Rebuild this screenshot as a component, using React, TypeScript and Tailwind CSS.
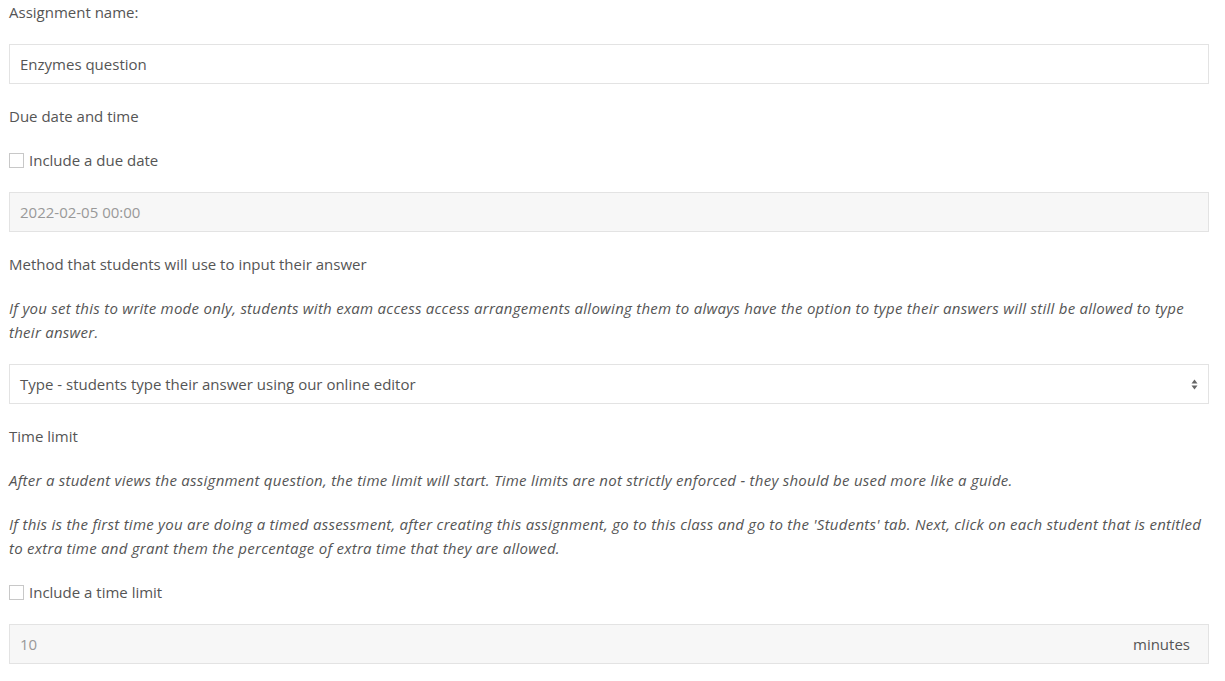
import React from "react";

const font = { fontFamily: '"Open Sans", "Liberation Sans", sans-serif' };

function Label({ children }: { children: React.ReactNode }) {
  return <p className="mb-5 leading-6">{children}</p>;
}

function Help({ children }: { children: React.ReactNode }) {
  return <p className="mb-5 leading-6 italic tracking-[0.26px]">{children}</p>;
}

function Check({ label }: { label: string }) {
  return (
    <label className="mb-5 flex h-6 items-center">
      <span className="mr-[5px] h-[15px] w-[15px] border border-[#c8c8c8] bg-white" />
      <span>{label}</span>
    </label>
  );
}

export default function App() {
  return (
    <div
      className="min-h-screen bg-white pl-[9px] pr-4 text-[15px] text-[#555555]"
      style={font}
    >
      <Label>Assignment name:</Label>
      <div className="mb-5 flex h-10 items-center border border-[#e3e3e3] bg-white px-[10px] text-[#555555]">
        Enzymes question
      </div>

      <Label>Due date and time</Label>
      <Check label="Include a due date" />
      <div className="mb-5 flex h-10 items-center border border-[#e3e3e3] bg-[#f7f7f7] px-[10px] text-[#999999]">
        2022-02-05 00:00
      </div>

      <Label>Method that students will use to input their answer</Label>
      <Help>
        If you set this to write mode only, students with exam access access arrangements allowing them to always
        have the option to type their answers will still be allowed to type their answer.
      </Help>
      <div className="mb-5 flex h-10 items-center justify-between border border-[#e3e3e3] bg-white pl-[10px] pr-[10px]">
        <span>Type - students type their answer using our online editor</span>
        <svg width="7" height="11" viewBox="0 0 7 11" className="text-[#666666]">
          <path d="M3.5 0.5 L6.5 4.5 H0.5 Z" fill="currentColor" />
          <path d="M3.5 10.5 L6.5 6.5 H0.5 Z" fill="currentColor" />
        </svg>
      </div>

      <Label>Time limit</Label>
      <Help>
        After a student views the assignment question, the time limit will start. Time limits are not strictly
        enforced - they should be used more like a guide.
      </Help>
      <Help>
        If this is the first time you are doing a timed assessment, after creating this assignment, go to this class
        and go to the 'Students' tab. Next, click on each student that is entitled to extra time and grant them the
        percentage of extra time that they are allowed.
      </Help>
      <Check label="Include a time limit" />
      <div className="flex h-10 items-center justify-between border border-[#e3e3e3] bg-[#f7f7f7] pl-[10px] pr-[18px]">
        <span className="text-[#999999]">10</span>
        <span className="text-[#555555]">minutes</span>
      </div>
    </div>
  );
}
